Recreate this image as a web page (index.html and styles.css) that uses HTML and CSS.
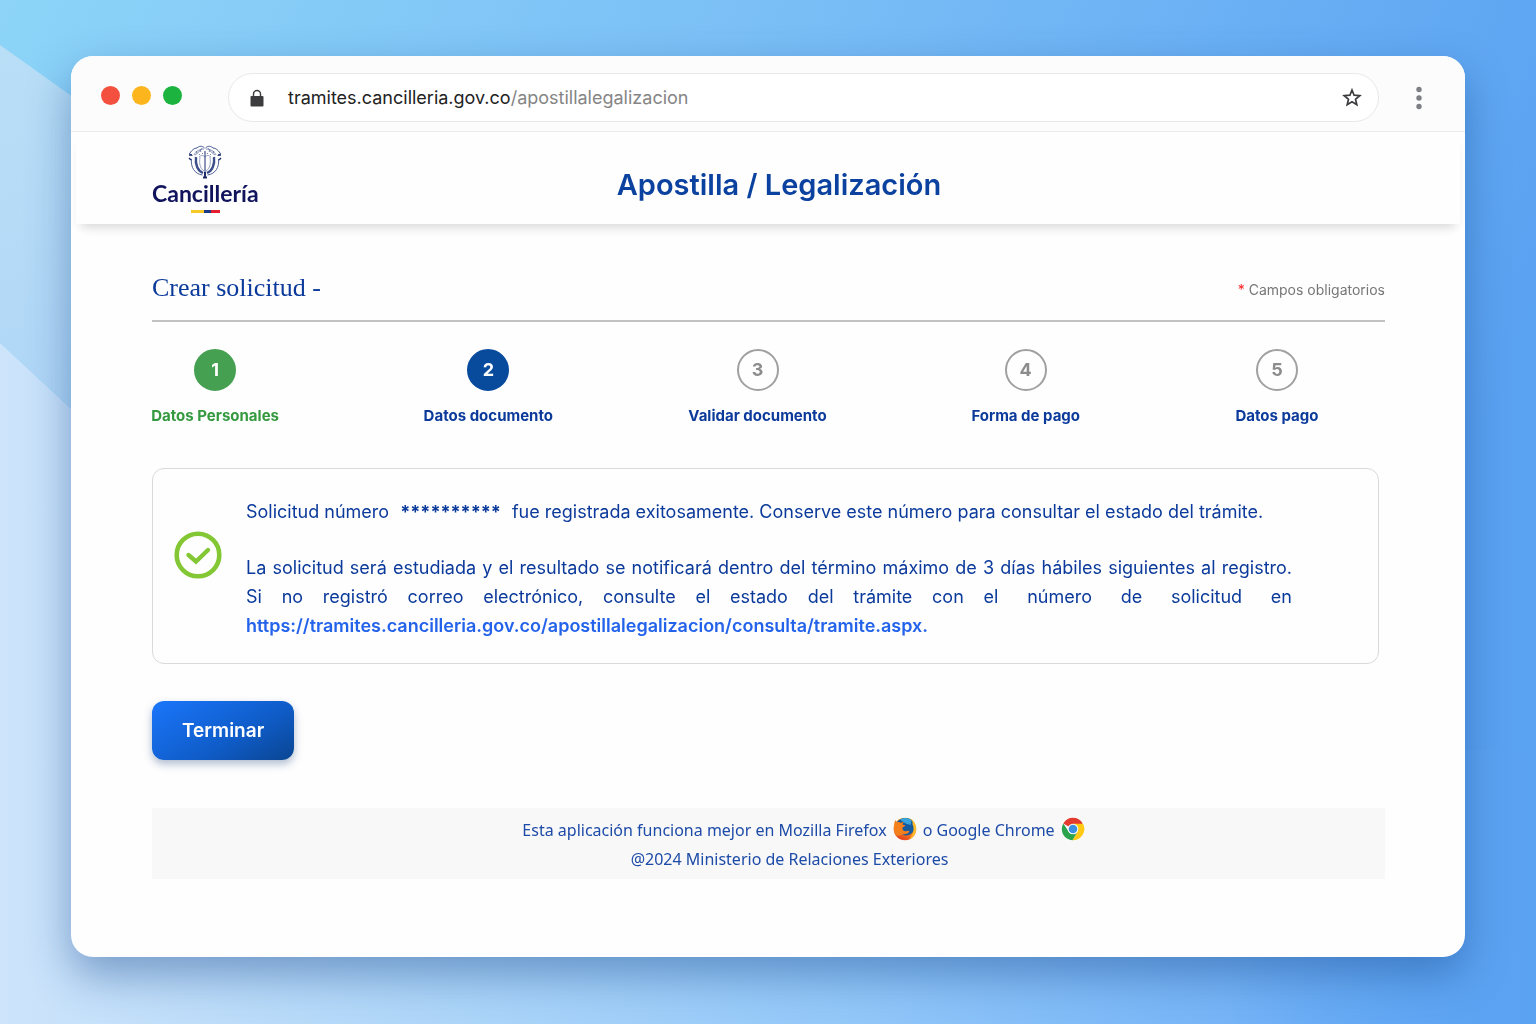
FILE: index.html
```html
<!DOCTYPE html>
<html lang="es">
<head>
  <meta charset="UTF-8">
  <meta name="viewport" content="width=device-width, initial-scale=1.0">
  <title>Apostilla / Legalización</title>
  <link rel="stylesheet" href="styles.css">
</head>
<body>
  <svg class="backdrop" viewBox="0 0 1536 1024" preserveAspectRatio="none" aria-hidden="true">
    <defs>
      <linearGradient id="sky" x1="0" y1="0" x2="1" y2="0.3">
        <stop offset="0" stop-color="#8dd4f8"/>
        <stop offset="0.5" stop-color="#79bdf6"/>
        <stop offset="1" stop-color="#5aa2f2"/>
      </linearGradient>
      <linearGradient id="band" x1="0" y1="0" x2="0.1" y2="1">
        <stop offset="0" stop-color="#b9dff7"/>
        <stop offset="1" stop-color="#a9cff7"/>
      </linearGradient>
      <linearGradient id="floor" x1="0" y1="0" x2="1" y2="0">
        <stop offset="0" stop-color="#cde4fb"/>
        <stop offset="0.25" stop-color="#b2d8f9"/>
        <stop offset="0.55" stop-color="#93c8f9"/>
        <stop offset="0.8" stop-color="#76b4f7"/>
        <stop offset="1" stop-color="#62a8f5" stop-opacity="0"/>
      </linearGradient>
    </defs>
    <rect width="1536" height="1024" fill="url(#sky)"/>
    <path d="M0 45L420 345V730L0 343Z" fill="url(#band)"/>
    <path d="M0 343L440 750H1536V1024H0Z" fill="url(#floor)"/>
  </svg>

  <div class="window">
    <!-- barra del navegador -->
    <div class="browser-bar">
      <div class="lights">
        <span class="light red"></span>
        <span class="light yellow"></span>
        <span class="light green"></span>
      </div>
      <div class="address">
        <svg class="lock" viewBox="0 0 14 18" aria-hidden="true">
          <path d="M3.5 8V5a3.5 3.5 0 0 1 7 0v3" fill="none" stroke="#3c3c3f" stroke-width="1.4"/>
          <rect x="0.5" y="7" width="13" height="10.5" rx="1" fill="#3c3c3f"/>
        </svg>
        <span class="url">tramites.cancilleria.gov.co<span class="path">/apostillalegalizacion</span></span>
        <button class="icon-btn" type="button" aria-label="Favorito">
          <svg width="20" height="20" viewBox="0 0 20 20" fill="none" stroke="#3c3c3f" stroke-width="1.7">
            <path d="M10 2l2.1 5.2 5.7.4-4.3 3.7 1.3 5.5L10 13.8l-4.8 3 1.3-5.5L2.2 7.6l5.7-.4z"/>
          </svg>
        </button>
      </div>
      <button class="icon-btn" type="button" aria-label="Menú">
        <svg width="8" height="24" viewBox="0 0 8 24" fill="#7d7f84">
          <circle cx="4" cy="3.5" r="2.7"/><circle cx="4" cy="12" r="2.7"/><circle cx="4" cy="20.5" r="2.7"/>
        </svg>
      </button>
    </div>

    <header class="site-header">
      <div class="logo">
        <svg width="34" height="34" viewBox="0 0 34 34" fill="none" stroke="#3c4f8a" aria-hidden="true">
          <path d="M16.5 3C14 .5 11 1 9 3 6 3 3 6 1.5 9l3 1.5M17.5 3C20 .5 23 1 25 3c3 0 6 3 7.5 6l-3 1.5" stroke-width="1"/>
          <path d="M16 4c-4 0-8 2-10 6M18 4c4 0 8 2 10 6M14 3c-2 3-4 5-7 7M20 3c2 3 4 5 7 7" stroke-width="0.6"/>
          <path d="M8 6l1 2M12 5l1 2M11 9l1 1M14 8l1 1M22 5l-1 2M26 6l-1 2M23 9l-1 1M20 8l-1 1" stroke-width="0.7"/>
          <path d="M8 12c-1 8 2 14 7 16M26 12c1 8-2 14-7 16" stroke-width="2.4"/>
          <path d="M3.500 14c-1 8 3 15 11 16M30.500 14c1 8-3 15-11 16" stroke-width="0.9"/>
          <path d="M12 12c-1 7 0 11 4 14M22 12c1 7 0 11-4 14M11 12c2-2 4-2 6 0 2-2 4-2 6 0" stroke-width="0.5"/>
          <path d="M17 6v26" stroke-width="1.2"/>
          <path d="M17 27v6M15 32.5h4" stroke="#1d2c6b" stroke-width="2"/>
          <path d="M1 10h3M30 10h3M1 13l2 2M33 13l-2 2" stroke="#1d2c6b" stroke-width="1.4"/>
        </svg>
        <span class="logo-name">Cancillería</span>
        <span class="flag"></span>
      </div>
      <h1>Apostilla / Legalización</h1>
    </header>

    <main class="content">
      <div class="heading">
        <h2>Crear solicitud -</h2>
        <p class="required"><span>*</span> Campos obligatorios</p>
      </div>

      <ol class="steps">
        <li class="step done"><span class="number">1</span>Datos Personales</li>
        <li class="step current"><span class="number">2</span>Datos documento</li>
        <li class="step"><span class="number">3</span>Validar documento</li>
        <li class="step"><span class="number">4</span>Forma de pago</li>
        <li class="step"><span class="number">5</span>Datos pago</li>
      </ol>

      <section class="notice">
        <svg class="check" viewBox="0 0 48 48" fill="none" stroke="#84c735" aria-hidden="true">
          <circle cx="24" cy="24" r="21.3" stroke-width="4.6"/>
          <path d="M14.5 24l7.5 6.5L34 19" stroke-width="4.4" stroke-linecap="round"/>
        </svg>
        <div class="notice-text">
          <p>Solicitud número <strong>**********</strong> fue registrada exitosamente. Conserve este número para consultar el estado del trámite.</p>
          <p>La solicitud será estudiada y el resultado se notificará dentro del término máximo de 3 días hábiles siguientes al registro. Si&nbsp;no registró correo electrónico, consulte el estado del trámite con el&ensp; número&ensp; de&ensp; solicitud&ensp; en <a href="#">https://tramites.cancilleria.gov.co/apostillalegalizacion/consulta/tramite.aspx.</a></p>
        </div>
      </section>

      <button class="finish" type="button">Terminar</button>

      <footer class="footer">
        <p class="browsers">
          Esta aplicación funciona mejor en Mozilla Firefox
          <svg width="24" height="24" viewBox="0 0 24 24" aria-hidden="true">
            <defs>
              <linearGradient id="fox" x1="0.8" y1="0" x2="0.3" y2="1">
                <stop offset="0" stop-color="#ffcb2e"/>
                <stop offset="0.5" stop-color="#f98b1d"/>
                <stop offset="1" stop-color="#e33b1e"/>
              </linearGradient>
            </defs>
            <circle cx="12" cy="12" r="11.3" fill="url(#fox)"/>
            <path d="M4 5C8-.5 17-.3 20.5 5c2.500 5 .5 11-4.500 13-5 1.500-10-1-11-5z" fill="#15599f"/>
            <path d="M7 2.800c4-2.800 9-2 11.500.7l-1 4.500-5-1.500z" fill="#38a3da"/>
            <path d="M2.300 3c.6 1.200 1.300 1.800 2.200 2.300 1.400-.4 2.600-.2 3.500.6.9-.7 1.800-1 3-.9-1 .8-1.400 1.700-1.200 2.700l2.400.6c0 1-1.500 1.500-2.700 2.200-.4 2.500 1.500 4.300 4.200 3.500 1.300-.5 2.300-.2 2.700.4-1 1.300-2 2.300-4 2.500-5 .5-7 3-10 1C.3 14 .5 7 2.300 3z" fill="#f4801d"/>
            <path d="M17.500 1.500c4 2.500 5.800 6.500 5.500 11-.3 4.500-3 8.500-7 10 3-3.500 5-7 4.500-12-.3-2-.8-3.200-1.800-4.200.6 0 1 .2 1.300.4-.5-2-1.300-3.500-2.500-5.200z" fill="#ffbd2b"/>
          </svg>
          o Google Chrome
          <svg width="24" height="24" viewBox="0 0 24 24" aria-hidden="true">
            <path d="M12 12L2.300 6.400A11.200 11.200 0 0 1 21.700 6.400z" fill="#e33b2e"/>
            <path d="M12 6.800h10A11.200 11.200 0 0 1 11.500 23.200L16.500 14.600z" fill="#ffc914"/>
            <path d="M2.300 6.400L7.500 14.600c1.800 2.500 5 3.300 8.300 1.200L11.500 23.200A11.200 11.200 0 0 1 2.300 6.400z" fill="#2ba24c"/>
            <circle cx="12" cy="12" r="5.3" fill="#fff"/>
            <circle cx="12" cy="12" r="4.3" fill="#3b8fe0"/>
          </svg>
        </p>
        <p>@2024 Ministerio de Relaciones Exteriores</p>
      </footer>
    </main>
  </div>
</body>
</html>
```
FILE: styles.css
```css
* {
  box-sizing: border-box;
}

body {
  margin: 0;
  min-height: 100vh;
  padding: 56px 71px 67px;
  display: flex;
  font-family: Inter, 'Liberation Sans', sans-serif;
  color: #0b3a9b;
}

h1, h2, p, ol {
  margin: 0;
  padding: 0;
}

button {
  font-family: inherit;
  border: none;
  cursor: pointer;
}

.backdrop {
  position: fixed;
  top: 0;
  left: 0;
  width: 100%;
  height: 100%;
  z-index: -1;
}

.window {
  flex: 1;
  background: #fefefe;
  border-radius: 22px;
  box-shadow: 0 18px 44px rgba(22, 70, 140, 0.45);
}

/* barra del navegador */
.browser-bar {
  display: flex;
  align-items: center;
  height: 76px;
  padding: 8px 40px 0 30px;
  background: #fcfcfc;
  border-bottom: 1px solid #ececec;
  border-radius: 22px 22px 0 0;
}

.lights {
  display: flex;
  gap: 12px;
  padding-bottom: 4px;
}

.light {
  width: 19px;
  height: 19px;
  border-radius: 50%;
}

.red {
  background: #f4503f;
}

.yellow {
  background: #fdb51e;
}

.green {
  background: #1cb33f;
}

.address {
  flex: 1;
  display: flex;
  align-items: center;
  height: 49px;
  margin: 0 34px 0 46px;
  padding: 0 14px 0 21px;
  background: #fff;
  border: 1px solid #e8e8e8;
  border-radius: 25px;
}

.lock {
  width: 14px;
  height: 18px;
  margin-right: 24px;
}

.url {
  flex: 1;
  font-size: 18px;
  color: #222;
}

.path {
  color: #858585;
}

.icon-btn {
  display: flex;
  padding: 2px;
  background: none;
}

/* cabecera */
.site-header {
  display: grid;
  grid-template-columns: 1fr auto 1fr;
  height: 92px;
  margin: 0 5px;
  padding: 13px 54px 0 76px;
  background: #fefefe;
  box-shadow: 0 8px 10px -5px rgba(0, 0, 0, 0.16);
}

.logo {
  display: flex;
  flex-direction: column;
  align-items: center;
  justify-self: start;
}

.logo-name {
  font-family: Lato, sans-serif;
  font-size: 23px;
  line-height: 28px;
  font-weight: 700;
  color: #11145c;
}

.flag {
  width: 29px;
  height: 3px;
  margin-top: 3px;
  background: linear-gradient(to right, #f6c928 45%, #193a86 45% 70%, #e51e2f 70%);
}

h1 {
  padding-top: 23px;
  font-size: 29px;
  line-height: 34px;
  font-weight: 600;
  color: #0b419f;
}

/* contenido */
.content {
  padding: 46px 80px 78px 81px;
}

.heading {
  display: flex;
  justify-content: space-between;
  align-items: center;
  height: 52px;
  padding-bottom: 14px;
  border-bottom: 2px solid #c2c2c2;
}

h2 {
  font-family: 'Liberation Serif', serif;
  font-size: 26px;
  font-weight: 400;
}

.required {
  padding-top: 2px;
  font-size: 14px;
  color: #777;
}

.required span {
  color: #f22;
}

.steps {
  display: grid;
  grid-template-columns: 276fr 270fr 268fr 268fr 234fr;
  margin: 27px -9px 0 -75px;
  list-style: none;
}

.step {
  display: flex;
  flex-direction: column;
  align-items: center;
  gap: 15px;
  font-size: 15px;
  line-height: 20px;
  font-weight: 700;
}

.number {
  display: flex;
  align-items: center;
  justify-content: center;
  width: 42px;
  height: 42px;
  border: 2px solid #a0a0a0;
  border-radius: 50%;
  font-size: 18px;
  color: #8c8c8c;
}

.done {
  color: #34993f;
}

.done .number {
  background: #46a052;
  border-color: #46a052;
  color: #fff;
}

.current .number {
  background: #084b9d;
  border-color: #084b9d;
  color: #fff;
}

.notice {
  display: flex;
  align-items: center;
  gap: 24px;
  margin: 42px 6px 0 0;
  padding: 28px 86px 23px 21px;
  border: 1px solid #dadada;
  border-radius: 12px;
}

.check {
  flex: none;
  width: 48px;
  height: 48px;
  margin-bottom: 28px;
}

.notice-text {
  flex: 1;
  font-size: 18px;
  line-height: 29px;
  text-align: justify;
}

.notice-text p + p {
  margin-top: 27px;
}

.notice-text strong {
  margin: 0 6px;
}

.notice-text a {
  color: #2362ea;
  font-weight: 600;
  text-decoration: none;
}

.finish {
  display: block;
  margin-top: 37px;
  padding: 0 30px;
  height: 59px;
  border-radius: 12px;
  background: linear-gradient(150deg, #1b76fb, #0f5cc8 60%, #0a4592);
  box-shadow: 0 4px 8px rgba(20, 60, 120, 0.35);
  color: #fff;
  font-size: 19px;
  font-weight: 600;
}

.footer {
  margin-top: 48px;
  padding: 8px 0 5px 42px;
  background: #f8f8f8;
  font-family: 'Noto Sans', sans-serif;
  font-size: 16px;
  line-height: 29px;
  text-align: center;
  color: #1d4ba8;
}

.browsers {
  display: flex;
  justify-content: center;
  align-items: center;
  gap: 6px;
  padding-left: 28px;
}

.browsers svg {
  margin-bottom: 4px;
}
```
